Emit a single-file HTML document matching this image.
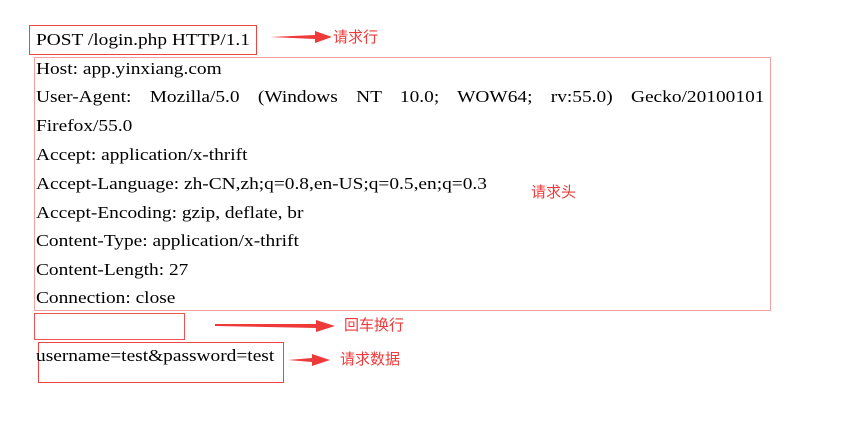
<!DOCTYPE html>
<html><head><meta charset="utf-8"><style>
body{margin:0;width:864px;height:432px;background:#fff;position:relative;overflow:hidden;font-family:"Liberation Serif",serif;font-size:17px;color:#000}
.t{position:absolute;left:36px;white-space:nowrap;line-height:20px;transform:scaleX(1.14);transform-origin:0 0}
.b{position:absolute;box-sizing:border-box}
.cn{position:absolute;color:#f03a3a;font-family:"Noto Sans CJK SC",sans-serif;font-size:15px;line-height:18px;white-space:nowrap}
.ua{position:absolute;left:36px;width:639px;text-align:justify;text-align-last:justify;line-height:20px;transform:scaleX(1.14);transform-origin:0 0;white-space:nowrap}
</style></head><body>
<div class="b" style="left:29px;top:25px;width:228px;height:30px;border:1.5px solid #ef4444"></div>
<div class="b" style="left:34px;top:57px;width:737px;height:254px;border:1.5px solid #f7a0a0"></div>
<div class="b" style="left:34px;top:313px;width:151px;height:27px;border:1.5px solid #ef5050"></div>
<div class="b" style="left:38px;top:342px;width:246px;height:41px;border:1.5px solid #ef4444"></div>
<div class="t" style="top:30px">POST /login.php HTTP/1.1</div>
<div class="t" style="top:59px">Host: app.yinxiang.com</div>
<div class="ua" style="top:87px">User-Agent: Mozilla/5.0 (Windows NT 10.0; WOW64; rv:55.0) Gecko/20100101</div>
<div class="t" style="top:116px">Firefox/55.0</div>
<div class="t" style="top:145px">Accept: application/x-thrift</div>
<div class="t" style="top:174px">Accept-Language: zh-CN,zh;q=0.8,en-US;q=0.5,en;q=0.3</div>
<div class="t" style="top:203px">Accept-Encoding: gzip, deflate, br</div>
<div class="t" style="top:231px">Content-Type: application/x-thrift</div>
<div class="t" style="top:260px">Content-Length: 27</div>
<div class="t" style="top:288px">Connection: close</div>
<div class="t" style="top:346px">username=test&amp;password=test</div>
<svg width="864" height="432" style="position:absolute;left:0;top:0">
<polygon points="270,37 315,35 315,31 332,37 315,43 315,39" fill="#ef3a3a"/>
<polygon points="215,324 316,324 316,320 335,326 316,332 316,328 215,326" fill="#ef3a3a"/>
<polygon points="288,360 312,358 312,354 330,360 312,366 312,362" fill="#ef3a3a"/>
</svg>
<div class="cn" style="left:333px;top:28px">请求行</div>
<div class="cn" style="left:531px;top:183px">请求头</div>
<div class="cn" style="left:344px;top:316px">回车换行</div>
<div class="cn" style="left:340px;top:350px">请求数据</div>
</body></html>
